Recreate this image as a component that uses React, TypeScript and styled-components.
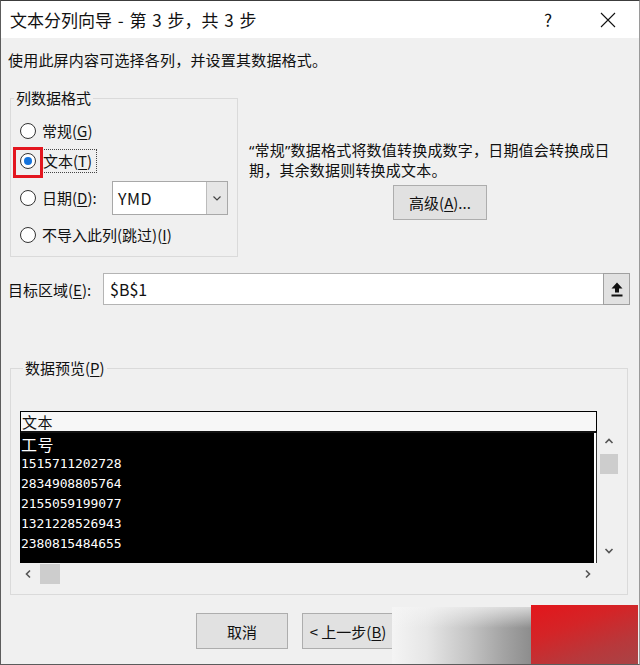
import React from "react";
import styled, { createGlobalStyle } from "styled-components";

const GlobalStyle = createGlobalStyle`
  html, body { margin: 0; padding: 0; background: #f0f0f0; }
  body { font-family: "Noto Sans CJK SC", "Noto Sans", sans-serif; }
  * { box-sizing: border-box; }
`;

const Window = styled.div`
  position: relative;
  width: 640px;
  height: 665px;
  background: #f0f0f0;
  border-top: 1px solid #3c3c3c;
  border-left: 1px solid #5c5c5c;
  border-right: 1px solid #9a9a9a;
  border-bottom: 1px solid #5c5c5c;
  display: flex;
  flex-direction: column;
  overflow: hidden;
  font-size: 15px;
  color: #111;
`;

const TitleBar = styled.div`
  height: 37px;
  flex-shrink: 0;
  background: #fff;
  display: flex;
  align-items: center;
  padding: 0 8px 0 9px;
  font-size: 17px;
  line-height: 22px;
`;

const TitleText = styled.div`
  flex: 1;
  white-space: nowrap;
  word-spacing: 2px;
`;

const HelpGlyph = styled.div`
  width: 24px;
  text-align: center;
  font-size: 17px;
  margin-right: 25px;
`;

const CloseButton = styled.div`
  width: 46px;
  height: 30px;
  display: flex;
  align-items: center;
  justify-content: center;
`;

const Body = styled.div`
  display: flex;
  flex-direction: column;
  padding: 0 11px 0 9px;
`;

const Intro = styled.div`
  margin: 11px 0 0 -2px;
  line-height: 22px;
  white-space: nowrap;
  letter-spacing: 0.2px;
`;

const TopRow = styled.div`
  display: flex;
  margin-top: 17px;
`;

const GroupBox = styled.fieldset<{ $width?: string }>`
  margin: 0;
  min-width: 0;
  width: ${(p) => p.$width ?? "auto"};
  border: 1px solid #dadada;
  padding: 0;
`;

const Legend = styled.legend`
  margin-left: 3px;
  padding: 0 2px;
  line-height: 20px;
  font-size: 15px;
`;

const FormatList = styled.div`
  display: flex;
  flex-direction: column;
  padding: 8px 0 6px 9px;
`;

const OptionRow = styled.div<{ $height: number; $gap?: number }>`
  display: flex;
  align-items: center;
  height: ${(p) => p.$height}px;
  margin-top: ${(p) => p.$gap ?? 0}px;
  line-height: 20px;
  white-space: nowrap;
`;

const RadioMark = styled.span<{ $checked?: boolean }>`
  position: relative;
  flex-shrink: 0;
  width: 16px;
  height: 16px;
  border-radius: 50%;
  border: 1px solid #333;
  background: #fff;
  margin-right: 6px;
  display: flex;
  align-items: center;
  justify-content: center;
  &::after {
    content: "";
    display: ${(p) => (p.$checked ? "block" : "none")};
    width: 8px;
    height: 8px;
    border-radius: 50%;
    background: #1473dc;
  }
`;

const Annotation = styled.span`
  position: absolute;
  left: -8px;
  top: -7px;
  width: 30px;
  height: 31px;
  border: 3px solid #e3161f;
`;

const FocusLabel = styled.span`
  margin-left: -1px;
  padding: 1px 4px 1px 1px;
  border: 1px dotted #444;
`;

const DateLabel = styled.span`
  width: 70px;
`;

const Combo = styled.div`
  width: 116px;
  height: 34px;
  display: flex;
  border: 1px solid #a8a8a8;
  background: #fff;
`;

const ComboValue = styled.div`
  flex: 1;
  padding-left: 5px;
  display: flex;
  align-items: center;
  font-size: 16px;
  letter-spacing: 0.5px;
`;

const ComboButton = styled.div`
  width: 21px;
  background: #e6e6e6;
  border-left: 1px solid #bcbcbc;
  display: flex;
  align-items: center;
  justify-content: center;
`;

const U = styled.span`
  text-decoration: underline;
  text-underline-offset: 2px;
`;

const Quote = styled.span`
  font-family: "Noto Sans", sans-serif;
`;

const Description = styled.div`
  flex: 1;
  margin-left: 11px;
  padding-top: 52px;
  display: flex;
  flex-direction: column;
  align-items: flex-start;
`;

const DescLine = styled.div`
  line-height: 20px;
  white-space: nowrap;
  letter-spacing: 0.2px;
`;

const PushButton = styled.button<{ $width: number; $height: number }>`
  width: ${(p) => p.$width}px;
  height: ${(p) => p.$height}px;
  background: #e1e1e1;
  border: 1px solid #adadad;
  font-family: inherit;
  font-size: 15px;
  color: #111;
  padding: 0;
  white-space: nowrap;
  overflow: hidden;
`;

const AdvancedButton = styled(PushButton)`
  margin: 5px 0 0 144px;
`;

const TargetRow = styled.div`
  display: flex;
  align-items: center;
  margin: 16px -2px 0 -2px;
  height: 32px;
`;

const TargetLabel = styled.div`
  width: 95px;
  white-space: nowrap;
`;

const TargetInput = styled.div`
  flex: 1;
  height: 32px;
  background: #fff;
  border: 1px solid #b4b4b4;
  border-right: none;
  display: flex;
  align-items: center;
  padding-left: 6px;
  font-size: 16px;
`;

const CollapseButton = styled.div`
  width: 27px;
  height: 32px;
  background: #e1e1e1;
  border: 1px solid #a0a0a0;
  display: flex;
  align-items: center;
  justify-content: center;
`;

const PreviewGroup = styled(GroupBox)`
  margin-top: 53px;
  padding: 33px 9px 10px 9px;
`;

const PreviewGrid = styled.div`
  display: grid;
  grid-template-columns: 577px 21px;
  grid-template-rows: 22px 130px 21px;
`;

const PreviewHeader = styled.div`
  grid-column: 1;
  grid-row: 1;
  background: #f7f7f7;
  border: 1px solid #000;
  border-bottom: 2px solid #111;
  font-size: 15px;
  line-height: 19px;
  padding-left: 1px;
  letter-spacing: 0.5px;
`;

const PreviewBody = styled.div`
  grid-column: 1;
  grid-row: 2;
  background: #000;
  border-right: 2px solid #fff;
  box-shadow: 1px 0 0 #333;
  color: #fff;
  padding-top: 1px;
  margin-right: 1px;
`;

const PreviewRow = styled.div<{ $cjk?: boolean }>`
  height: 20px;
  line-height: 20px;
  padding-left: 1px;
  font-family: ${(p) =>
    p.$cjk ? `"Noto Sans CJK SC", sans-serif` : `"DejaVu Sans Mono", monospace`};
  font-size: ${(p) => (p.$cjk ? 16 : 13)}px;
  letter-spacing: ${(p) => (p.$cjk ? 0.5 : -0.1)}px;
`;

const VScroll = styled.div`
  grid-column: 2;
  grid-row: 2;
  display: flex;
  flex-direction: column;
  padding: 0 0 3px 3px;
`;

const HScroll = styled.div`
  grid-column: 1;
  grid-row: 3;
  display: flex;
  align-items: center;
`;

const ArrowCell = styled.div`
  width: 18px;
  height: 18px;
  display: flex;
  align-items: center;
  justify-content: center;
  flex-shrink: 0;
`;

const Thumb = styled.div<{ $vertical?: boolean }>`
  background: #cdcdcd;
  width: ${(p) => (p.$vertical ? "18px" : "20px")};
  height: 20px;
  margin: ${(p) => (p.$vertical ? "3px 0 0 0" : "0 0 0 2px")};
`;

const Spacer = styled.div`
  flex: 1;
`;

const Footer = styled.div`
  display: flex;
  gap: 14px;
  margin-top: 18px;
  padding-left: 195px;
`;

const Watermark = styled.div`
  position: absolute;
  left: 391px;
  top: 606px;
  width: 140px;
  height: 60px;
  background:
    linear-gradient(180deg, rgba(245, 245, 245, 0.7) 0%, rgba(245, 245, 245, 0) 35%),
    linear-gradient(90deg, #f4f4f4 0%, #e6e6e6 25%, #c4c4c4 55%, #a3a3a3 80%, #8c8c8c 100%);
`;

const RedBlock = styled.div`
  position: absolute;
  left: 530px;
  top: 604px;
  width: 107px;
  height: 61px;
  background: linear-gradient(160deg, #e3161b 0%, #d42427 35%, #b8383b 70%, #a84446 100%);
`;

const Chevron = ({ dir }: { dir: "up" | "down" | "left" | "right" }) => {
  const paths: Record<string, string> = {
    up: "M1.5 6 L5 2.5 L8.5 6",
    down: "M1.5 3 L5 6.5 L8.5 3",
    left: "M6 1.5 L2.5 5 L6 8.5",
    right: "M3 1.5 L6.5 5 L3 8.5",
  };
  return (
    <svg width="10" height="10" viewBox="0 0 10 10">
      <path d={paths[dir]} fill="none" stroke="#555" strokeWidth="1.6" />
    </svg>
  );
};

const rows = [
  "1515711202728",
  "2834908805764",
  "2155059199077",
  "1321228526943",
  "2380815484655",
];

export default function App() {
  return (
    <>
      <GlobalStyle />
      <Window>
        <TitleBar>
          <TitleText>文本分列向导 - 第 3 步，共 3 步</TitleText>
          <HelpGlyph>?</HelpGlyph>
          <CloseButton>
            <svg width="16" height="16" viewBox="0 0 16 16">
              <path d="M1 1 L15 15 M15 1 L1 15" stroke="#111" strokeWidth="1.1" />
            </svg>
          </CloseButton>
        </TitleBar>
        <Body>
          <Intro>使用此屏内容可选择各列，并设置其数据格式。</Intro>
          <TopRow>
            <GroupBox $width="228px">
              <Legend>列数据格式</Legend>
              <FormatList>
                <OptionRow $height={30}>
                  <RadioMark />
                  <span>
                    常规(<U>G</U>)
                  </span>
                </OptionRow>
                <OptionRow $height={30}>
                  <RadioMark $checked>
                    <Annotation />
                  </RadioMark>
                  <FocusLabel>
                    文本(<U>T</U>)
                  </FocusLabel>
                </OptionRow>
                <OptionRow $height={34} $gap={5}>
                  <RadioMark />
                  <DateLabel>
                    日期(<U>D</U>):
                  </DateLabel>
                  <Combo>
                    <ComboValue>YMD</ComboValue>
                    <ComboButton>
                      <svg width="10" height="10" viewBox="0 0 10 10">
                        <path d="M1.5 3.5 L5 7 L8.5 3.5" fill="none" stroke="#444" strokeWidth="1.2" />
                      </svg>
                    </ComboButton>
                  </Combo>
                </OptionRow>
                <OptionRow $height={30} $gap={5}>
                  <RadioMark />
                  <span>
                    不导入此列(跳过)(<U>I</U>)
                  </span>
                </OptionRow>
              </FormatList>
            </GroupBox>
            <Description>
              <DescLine>
                <Quote>“</Quote>常规<Quote>”</Quote>数据格式将数值转换成数字，日期值会转换成日
              </DescLine>
              <DescLine>期，其余数据则转换成文本。</DescLine>
              <AdvancedButton $width={94} $height={35}>
                高级(<U>A</U>)...
              </AdvancedButton>
            </Description>
          </TopRow>
          <TargetRow>
            <TargetLabel>
              目标区域(<U>E</U>):
            </TargetLabel>
            <TargetInput>$B$1</TargetInput>
            <CollapseButton>
              <svg width="12" height="15" viewBox="0 0 12 15">
                <path d="M6 0.5 L11.5 6.5 L8 6.5 L8 10.5 L4 10.5 L4 6.5 L0.5 6.5 Z" fill="#111" />
                <rect x="0.5" y="12.5" width="11" height="2" fill="#111" />
              </svg>
            </CollapseButton>
          </TargetRow>
          <PreviewGroup>
            <Legend>
              数据预览(<U>P</U>)
            </Legend>
            <PreviewGrid>
              <PreviewHeader>文本</PreviewHeader>
              <PreviewBody>
                <PreviewRow $cjk>工号</PreviewRow>
                {rows.map((r) => (
                  <PreviewRow key={r}>{r}</PreviewRow>
                ))}
              </PreviewBody>
              <VScroll>
                <ArrowCell>
                  <Chevron dir="up" />
                </ArrowCell>
                <Thumb $vertical />
                <Spacer />
                <ArrowCell>
                  <Chevron dir="down" />
                </ArrowCell>
              </VScroll>
              <HScroll>
                <ArrowCell>
                  <Chevron dir="left" />
                </ArrowCell>
                <Thumb />
                <Spacer />
                <ArrowCell>
                  <Chevron dir="right" />
                </ArrowCell>
              </HScroll>
            </PreviewGrid>
          </PreviewGroup>
        </Body>
        <Footer>
          <PushButton $width={92} $height={36}>取消</PushButton>
          <PushButton $width={92} $height={36}>
            &lt; 上一步(<U>B</U>)
          </PushButton>
          <PushButton $width={92} $height={36}>
            下一步(<U>N</U>) &gt;
          </PushButton>
          <PushButton $width={92} $height={36}>
            完成(<U>F</U>)
          </PushButton>
        </Footer>
        <Watermark />
        <RedBlock />
      </Window>
    </>
  );
}
